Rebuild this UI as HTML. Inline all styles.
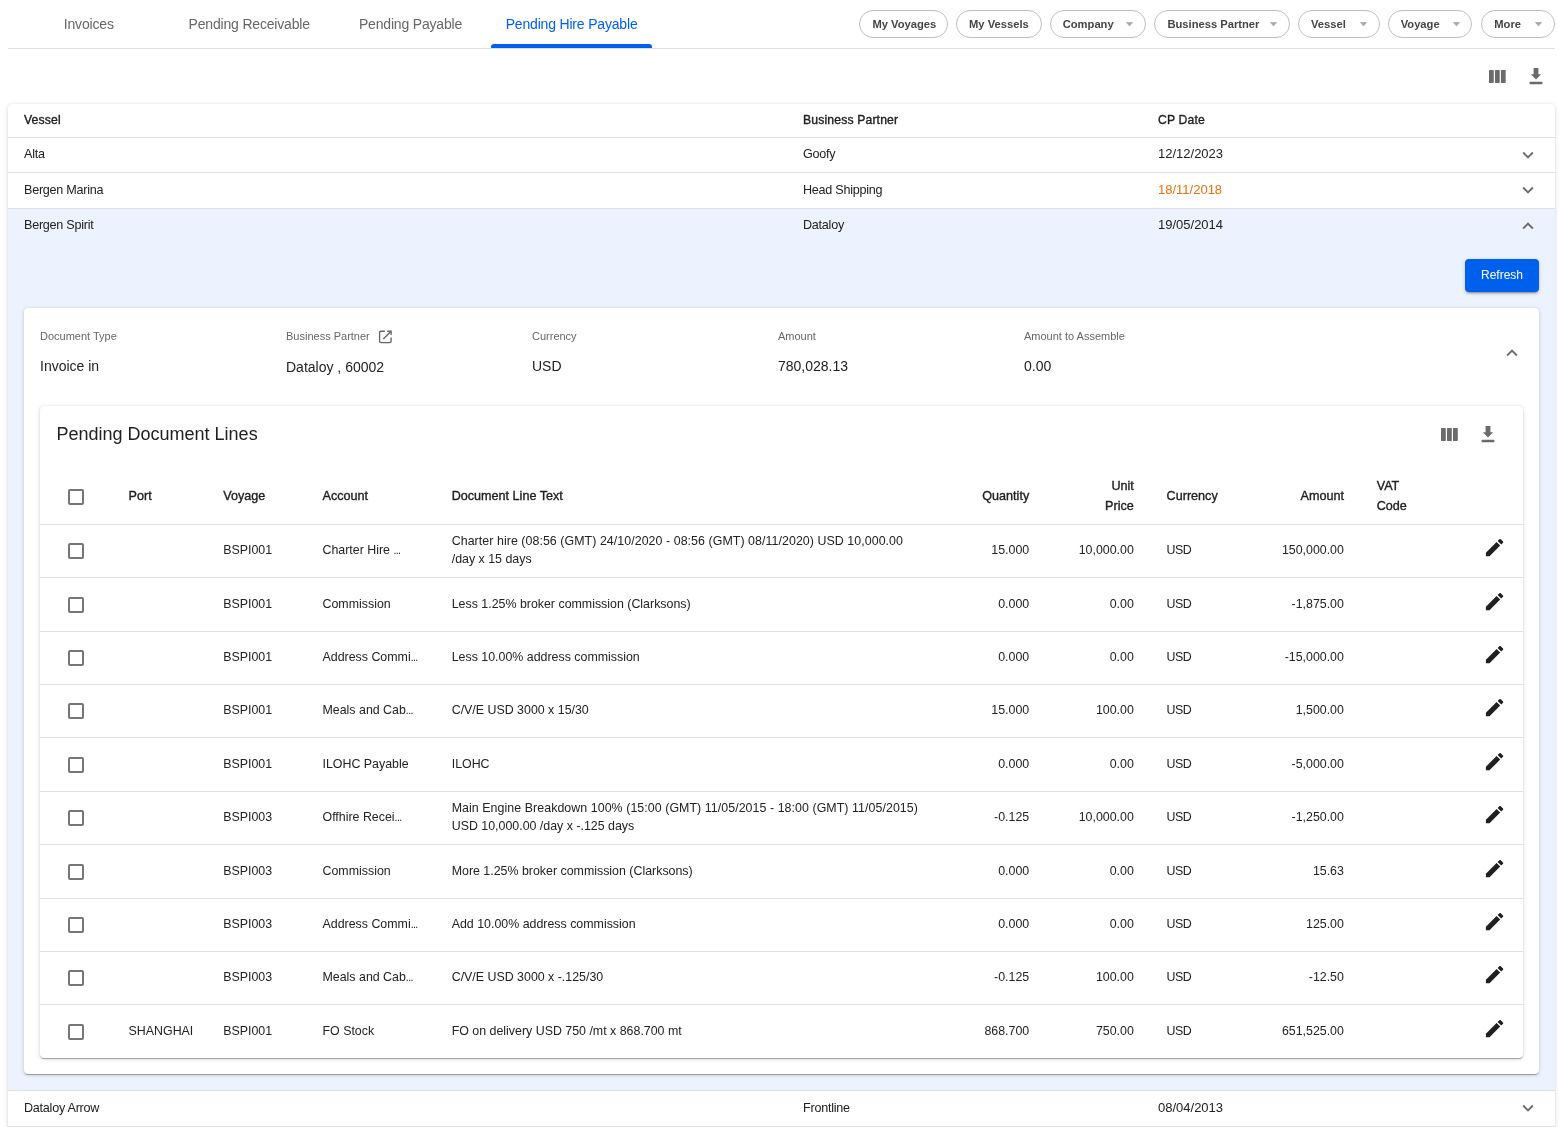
<!DOCTYPE html>
<html><head><meta charset="utf-8"><title>Pending Hire Payable</title>
<style>
html,body{margin:0;padding:0;background:#ffffff;}
#root{position:absolute;left:0;top:0;width:1559px;height:1127px;will-change:transform;}
body{width:1559px;height:1127px;position:relative;overflow:hidden;font-family:"Liberation Sans",sans-serif;}
.t{position:absolute;white-space:nowrap;line-height:20px;height:20px;}
.b{position:absolute;}
</style></head><body><div id="root">
<div class="t" style="left:-211.25px;width:600px;text-align:center;top:13.75px;font-size:14px;font-weight:400;color:#666666;letter-spacing:-0.18px;">Invoices</div>
<div class="t" style="left:-50.80px;width:600px;text-align:center;top:13.75px;font-size:14px;font-weight:400;color:#666666;letter-spacing:-0.18px;">Pending Receivable</div>
<div class="t" style="left:110.50px;width:600px;text-align:center;top:13.75px;font-size:14px;font-weight:400;color:#666666;letter-spacing:-0.18px;">Pending Payable</div>
<div class="t" style="left:271.60px;width:600px;text-align:center;top:13.75px;font-size:14px;font-weight:400;color:#0060ee;letter-spacing:-0.18px;">Pending Hire Payable</div>
<div class="b" style="left:8px;top:48px;width:1547px;height:1px;background:#e0e0e0"></div>
<div class="b" style="left:491px;top:44px;width:161px;height:4px;background:#0060ee;border-radius:3px 3px 0 0"></div>
<div class="b" style="left:859px;top:10px;width:87px;height:26px;border:1px solid #bdbdbd;border-radius:14px;background:#fff"></div>
<div class="t" style="left:872.40px;top:14.12px;font-size:11.2px;font-weight:700;color:#454545;">My Voyages</div>
<div class="b" style="left:956px;top:10px;width:84px;height:26px;border:1px solid #bdbdbd;border-radius:14px;background:#fff"></div>
<div class="t" style="left:969.00px;top:14.12px;font-size:11.2px;font-weight:700;color:#454545;">My Vessels</div>
<div class="b" style="left:1050px;top:10px;width:94px;height:26px;border:1px solid #bdbdbd;border-radius:14px;background:#fff"></div>
<div class="t" style="left:1062.70px;top:14.12px;font-size:11.2px;font-weight:700;color:#454545;">Company</div>
<svg class="b" style="left:1125.70px;top:22px" width="7" height="4.5" viewBox="0 0 7 4.5"><path d="M0.5 0.5 H6.5 L3.5 3.9 Z" fill="#aaaaaa" stroke="#aaaaaa" stroke-width="0.8" stroke-linejoin="round"/></svg>
<div class="b" style="left:1154px;top:10px;width:134px;height:26px;border:1px solid #bdbdbd;border-radius:14px;background:#fff"></div>
<div class="t" style="left:1167.40px;top:14.12px;font-size:11.2px;font-weight:700;color:#454545;">Business Partner</div>
<svg class="b" style="left:1269.50px;top:22px" width="7" height="4.5" viewBox="0 0 7 4.5"><path d="M0.5 0.5 H6.5 L3.5 3.9 Z" fill="#aaaaaa" stroke="#aaaaaa" stroke-width="0.8" stroke-linejoin="round"/></svg>
<div class="b" style="left:1298px;top:10px;width:80px;height:26px;border:1px solid #bdbdbd;border-radius:14px;background:#fff"></div>
<div class="t" style="left:1311.00px;top:14.12px;font-size:11.2px;font-weight:700;color:#454545;">Vessel</div>
<svg class="b" style="left:1359.50px;top:22px" width="7" height="4.5" viewBox="0 0 7 4.5"><path d="M0.5 0.5 H6.5 L3.5 3.9 Z" fill="#aaaaaa" stroke="#aaaaaa" stroke-width="0.8" stroke-linejoin="round"/></svg>
<div class="b" style="left:1388px;top:10px;width:82px;height:26px;border:1px solid #bdbdbd;border-radius:14px;background:#fff"></div>
<div class="t" style="left:1400.70px;top:14.12px;font-size:11.2px;font-weight:700;color:#454545;">Voyage</div>
<svg class="b" style="left:1452.60px;top:22px" width="7" height="4.5" viewBox="0 0 7 4.5"><path d="M0.5 0.5 H6.5 L3.5 3.9 Z" fill="#aaaaaa" stroke="#aaaaaa" stroke-width="0.8" stroke-linejoin="round"/></svg>
<div class="b" style="left:1481px;top:10px;width:72px;height:26px;border:1px solid #bdbdbd;border-radius:14px;background:#fff"></div>
<div class="t" style="left:1494.30px;top:14.12px;font-size:11.2px;font-weight:700;color:#454545;">More</div>
<svg class="b" style="left:1534.50px;top:22px" width="7" height="4.5" viewBox="0 0 7 4.5"><path d="M0.5 0.5 H6.5 L3.5 3.9 Z" fill="#aaaaaa" stroke="#aaaaaa" stroke-width="0.8" stroke-linejoin="round"/></svg>
<svg class="b" style="left:1488.80px;top:69.80px;overflow:visible" width="16.70" height="12.90" viewBox="0 0 16.70 12.90"><rect x="0.00" y="0" width="4.77" height="12.90" rx="0.6" fill="#6b6b6b"/><rect x="5.97" y="0" width="4.77" height="12.90" rx="0.6" fill="#6b6b6b"/><rect x="11.93" y="0" width="4.77" height="12.90" rx="0.6" fill="#6b6b6b"/></svg>
<svg class="b" style="left:1529.25px;top:67.80px;overflow:visible" width="14" height="17" viewBox="0 0 14 17"><path fill="#6b6b6b" d="M4.6 0 H9.4 V6.2 H12.15 L7 11.6 L1.85 6.2 H4.6 Z"/><rect x="0.55" y="13.7" width="12.9" height="2.5" rx="0.8" fill="#6b6b6b"/></svg>
<div class="b" style="left:8px;top:103.5px;width:1547px;height:1040px;background:#fff;border-radius:4px;box-shadow:0px 2px 1px -1px rgba(0,0,0,0.2),0px 1px 1px 0px rgba(0,0,0,0.14),0px 1px 5px 0px rgba(0,0,0,0.14),0 0 1px 0 rgba(0,0,0,0.12)"></div>
<div class="b" style="left:8px;top:208.5px;width:1547px;height:882px;background:#ecf2fe"></div>
<div class="t" style="left:24.00px;top:110.27px;font-size:12.2px;font-weight:400;color:#212121;letter-spacing:0.15px;-webkit-text-stroke:0.35px #212121;">Vessel</div>
<div class="t" style="left:803.00px;top:110.27px;font-size:12.2px;font-weight:400;color:#212121;letter-spacing:0.15px;-webkit-text-stroke:0.35px #212121;">Business Partner</div>
<div class="t" style="left:1158.00px;top:110.27px;font-size:12.2px;font-weight:400;color:#212121;letter-spacing:0.15px;-webkit-text-stroke:0.35px #212121;">CP Date</div>
<div class="b" style="left:8px;top:137px;width:1547px;height:1px;background:#e0e0e0"></div>
<div class="b" style="left:8px;top:172px;width:1547px;height:1px;background:#e0e0e0"></div>
<div class="b" style="left:8px;top:208px;width:1547px;height:1px;background:#e0e0e0"></div>
<div class="t" style="left:24.00px;top:144.03px;font-size:12.6px;font-weight:400;color:#212121;letter-spacing:-0.25px;">Alta</div>
<div class="t" style="left:803.00px;top:144.03px;font-size:12.6px;font-weight:400;color:#212121;letter-spacing:-0.25px;">Goofy</div>
<div class="t" style="left:1158.00px;top:143.90px;font-size:13px;font-weight:400;color:#212121;">12/12/2023</div>
<svg class="b" style="left:1517.20px;top:144.13px" width="22" height="22" viewBox="0 0 24 24"><path fill="#6e6e6e" d="M16.59 8.59 12 13.17 7.41 8.59 6 10l6 6 6-6z"/></svg>
<div class="t" style="left:24.00px;top:179.93px;font-size:12.6px;font-weight:400;color:#212121;letter-spacing:-0.25px;">Bergen Marina</div>
<div class="t" style="left:803.00px;top:179.93px;font-size:12.6px;font-weight:400;color:#212121;letter-spacing:-0.25px;">Head Shipping</div>
<div class="t" style="left:1158.00px;top:179.80px;font-size:13px;font-weight:400;color:#e8710a;">18/11/2018</div>
<svg class="b" style="left:1517.20px;top:179.23px" width="22" height="22" viewBox="0 0 24 24"><path fill="#6e6e6e" d="M16.59 8.59 12 13.17 7.41 8.59 6 10l6 6 6-6z"/></svg>
<div class="t" style="left:24.00px;top:215.03px;font-size:12.6px;font-weight:400;color:#212121;letter-spacing:-0.25px;">Bergen Spirit</div>
<div class="t" style="left:803.00px;top:215.03px;font-size:12.6px;font-weight:400;color:#212121;letter-spacing:-0.25px;">Dataloy</div>
<div class="t" style="left:1158.00px;top:214.90px;font-size:13px;font-weight:400;color:#212121;">19/05/2014</div>
<svg class="b" style="left:1517.20px;top:215.27px" width="22" height="22" viewBox="0 0 24 24"><path fill="#6e6e6e" d="M12 8l-6 6 1.41 1.41L12 10.83l4.59 4.58L18 14z"/></svg>
<div class="b" style="left:8px;top:1090px;width:1547px;height:1px;background:#e0e0e0"></div>
<div class="t" style="left:24.00px;top:1097.63px;font-size:12.6px;font-weight:400;color:#212121;letter-spacing:-0.25px;">Dataloy Arrow</div>
<div class="t" style="left:803.00px;top:1097.63px;font-size:12.6px;font-weight:400;color:#212121;letter-spacing:-0.25px;">Frontline</div>
<div class="t" style="left:1158.00px;top:1097.50px;font-size:13px;font-weight:400;color:#212121;">08/04/2013</div>
<svg class="b" style="left:1517.20px;top:1097.03px" width="22" height="22" viewBox="0 0 24 24"><path fill="#6e6e6e" d="M16.59 8.59 12 13.17 7.41 8.59 6 10l6 6 6-6z"/></svg>
<div class="b" style="left:8px;top:1126px;width:1547px;height:1px;background:#e0e0e0"></div>
<div class="b" style="left:1465px;top:259px;width:74px;height:33px;background:#0060ee;border-radius:4px;box-shadow:0px 3px 1px -2px rgba(0,0,0,0.2),0px 2px 2px 0px rgba(0,0,0,0.14),0px 1px 5px 0px rgba(0,0,0,0.12)"></div>
<div class="t" style="left:1202.00px;width:600px;text-align:center;top:264.84px;font-size:12px;font-weight:400;color:#ffffff;">Refresh</div>
<div class="b" style="left:24px;top:308px;width:1515px;height:766px;background:#fff;border-radius:4px;box-shadow:0px 2px 1px -1px rgba(0,0,0,0.2),0px 1px 1px 0px rgba(0,0,0,0.14),0px 1px 5px 0px rgba(0,0,0,0.14),0 0 1px 0 rgba(0,0,0,0.12)"></div>
<div class="t" style="left:40.00px;top:325.79px;font-size:11px;font-weight:400;color:#666666;">Document Type</div>
<div class="t" style="left:40.00px;top:356.45px;font-size:14px;font-weight:400;color:#212121;">Invoice in</div>
<div class="t" style="left:286.00px;top:325.79px;font-size:11px;font-weight:400;color:#666666;">Business Partner</div>
<div class="t" style="left:286.00px;top:357.45px;font-size:14px;font-weight:400;color:#212121;">Dataloy , 60002</div>
<div class="t" style="left:532.00px;top:325.79px;font-size:11px;font-weight:400;color:#666666;">Currency</div>
<div class="t" style="left:532.00px;top:356.45px;font-size:14px;font-weight:400;color:#212121;">USD</div>
<div class="t" style="left:778.00px;top:325.79px;font-size:11px;font-weight:400;color:#666666;">Amount</div>
<div class="t" style="left:778.00px;top:356.45px;font-size:14px;font-weight:400;color:#212121;">780,028.13</div>
<div class="t" style="left:1024.00px;top:325.79px;font-size:11px;font-weight:400;color:#666666;">Amount to Assemble</div>
<div class="t" style="left:1024.00px;top:356.45px;font-size:14px;font-weight:400;color:#212121;">0.00</div>
<svg class="b" style="left:378px;top:329.5px;overflow:visible" width="14" height="14" viewBox="0 0 14 14" fill="none" stroke="#666" stroke-width="1.35" stroke-linecap="butt"><path d="M6.8 1.2 H3.0 Q1.6 1.2 1.6 2.6 V11.2 Q1.6 12.6 3.0 12.6 H11.7 Q13.1 12.6 13.1 11.2 V7.6"/><path d="M5.3 9.0 L12.6 1.7"/><path d="M9.2 1.2 H13.1 V5.1"/></svg>
<svg class="b" style="left:1501.40px;top:342.27px" width="22" height="22" viewBox="0 0 24 24"><path fill="#6e6e6e" d="M12 8l-6 6 1.41 1.41L12 10.83l4.59 4.58L18 14z"/></svg>
<div class="b" style="left:40px;top:406px;width:1483px;height:652px;background:#fff;border-radius:4px;box-shadow:0px 2px 1px -1px rgba(0,0,0,0.2),0px 1px 1px 0px rgba(0,0,0,0.14),0px 1px 5px 0px rgba(0,0,0,0.14),0 0 1px 0 rgba(0,0,0,0.12)"></div>
<div class="t" style="left:56.50px;top:423.86px;font-size:18px;font-weight:400;color:#212121;">Pending Document Lines</div>
<svg class="b" style="left:1440.70px;top:427.80px;overflow:visible" width="16.80" height="12.90" viewBox="0 0 16.80 12.90"><rect x="0.00" y="0" width="4.80" height="12.90" rx="0.6" fill="#6b6b6b"/><rect x="6.00" y="0" width="4.80" height="12.90" rx="0.6" fill="#6b6b6b"/><rect x="12.00" y="0" width="4.80" height="12.90" rx="0.6" fill="#6b6b6b"/></svg>
<svg class="b" style="left:1481.20px;top:425.60px;overflow:visible" width="14" height="17" viewBox="0 0 14 17"><path fill="#6b6b6b" d="M4.6 0 H9.4 V6.2 H12.15 L7 11.6 L1.85 6.2 H4.6 Z"/><rect x="0.55" y="13.7" width="12.9" height="2.5" rx="0.8" fill="#6b6b6b"/></svg>
<div class="b" style="left:68px;top:488.70px;width:12.4px;height:12.4px;border:2px solid #767676;border-radius:2px"></div>
<div class="t" style="left:128.60px;top:485.93px;font-size:12.6px;font-weight:400;color:#212121;-webkit-text-stroke:0.35px #212121;">Port</div>
<div class="t" style="left:223.20px;top:485.93px;font-size:12.6px;font-weight:400;color:#212121;-webkit-text-stroke:0.35px #212121;">Voyage</div>
<div class="t" style="left:322.50px;top:485.93px;font-size:12.6px;font-weight:400;color:#212121;-webkit-text-stroke:0.35px #212121;">Account</div>
<div class="t" style="left:451.70px;top:485.93px;font-size:12.6px;font-weight:400;color:#212121;-webkit-text-stroke:0.35px #212121;">Document Line Text</div>
<div class="t" style="left:429.20px;width:600px;text-align:right;top:485.93px;font-size:12.6px;font-weight:400;color:#212121;-webkit-text-stroke:0.35px #212121;">Quantity</div>
<div class="t" style="left:533.80px;width:600px;text-align:right;top:475.63px;font-size:12.6px;font-weight:400;color:#212121;-webkit-text-stroke:0.35px #212121;">Unit</div>
<div class="t" style="left:533.80px;width:600px;text-align:right;top:496.43px;font-size:12.6px;font-weight:400;color:#212121;-webkit-text-stroke:0.35px #212121;">Price</div>
<div class="t" style="left:1166.60px;top:485.93px;font-size:12.6px;font-weight:400;color:#212121;-webkit-text-stroke:0.35px #212121;">Currency</div>
<div class="t" style="left:743.90px;width:600px;text-align:right;top:485.93px;font-size:12.6px;font-weight:400;color:#212121;-webkit-text-stroke:0.35px #212121;">Amount</div>
<div class="t" style="left:1376.70px;top:475.63px;font-size:12.6px;font-weight:400;color:#212121;-webkit-text-stroke:0.35px #212121;">VAT</div>
<div class="t" style="left:1376.70px;top:496.43px;font-size:12.6px;font-weight:400;color:#212121;-webkit-text-stroke:0.35px #212121;">Code</div>
<div class="b" style="left:40px;top:524px;width:1483px;height:1px;background:#e0e0e0"></div>
<div class="b" style="left:40px;top:577px;width:1483px;height:1px;background:#e0e0e0"></div>
<div class="b" style="left:40px;top:631px;width:1483px;height:1px;background:#e0e0e0"></div>
<div class="b" style="left:40px;top:684px;width:1483px;height:1px;background:#e0e0e0"></div>
<div class="b" style="left:40px;top:737px;width:1483px;height:1px;background:#e0e0e0"></div>
<div class="b" style="left:40px;top:791px;width:1483px;height:1px;background:#e0e0e0"></div>
<div class="b" style="left:40px;top:844px;width:1483px;height:1px;background:#e0e0e0"></div>
<div class="b" style="left:40px;top:898px;width:1483px;height:1px;background:#e0e0e0"></div>
<div class="b" style="left:40px;top:951px;width:1483px;height:1px;background:#e0e0e0"></div>
<div class="b" style="left:40px;top:1004px;width:1483px;height:1px;background:#e0e0e0"></div>
<div class="b" style="left:68px;top:542.70px;width:12.4px;height:12.4px;border:2px solid #767676;border-radius:2px"></div>
<div class="t" style="left:223.20px;top:539.70px;font-size:12.4px;font-weight:400;color:#222222;">BSPI001</div>
<div class="t" style="left:322.50px;top:539.70px;font-size:12.4px;font-weight:400;color:#222222;">Charter Hire <span style="letter-spacing:-0.6px;font-size:0.85em">...</span></div>
<div class="t" style="left:451.70px;top:530.70px;font-size:12.4px;font-weight:400;color:#222222;letter-spacing:0.06px;">Charter hire (08:56 (GMT) 24/10/2020 - 08:56 (GMT) 08/11/2020) USD 10,000.00</div>
<div class="t" style="left:451.70px;top:549.00px;font-size:12.4px;font-weight:400;color:#222222;">/day x 15 days</div>
<div class="t" style="left:429.20px;width:600px;text-align:right;top:539.70px;font-size:12.4px;font-weight:400;color:#222222;">15.000</div>
<div class="t" style="left:533.80px;width:600px;text-align:right;top:539.70px;font-size:12.4px;font-weight:400;color:#222222;">10,000.00</div>
<div class="t" style="left:1166.60px;top:539.70px;font-size:12.4px;font-weight:400;color:#222222;letter-spacing:-0.5px;">USD</div>
<div class="t" style="left:743.90px;width:600px;text-align:right;top:539.70px;font-size:12.4px;font-weight:400;color:#222222;">150,000.00</div>
<svg class="b" style="left:1482.90px;top:536.40px" width="23.2" height="23.2" viewBox="0 0 24 24"><path fill="#1f1f1f" d="M3 17.25V21h3.75L17.81 9.94l-3.75-3.75L3 17.25zM20.71 7.04c.39-.39.39-1.02 0-1.41l-2.34-2.34c-.39-.39-1.02-.39-1.41 0l-1.83 1.83 3.75 3.75 1.83-1.83z"/></svg>
<div class="b" style="left:68px;top:596.70px;width:12.4px;height:12.4px;border:2px solid #767676;border-radius:2px"></div>
<div class="t" style="left:223.20px;top:593.70px;font-size:12.4px;font-weight:400;color:#222222;">BSPI001</div>
<div class="t" style="left:322.50px;top:593.70px;font-size:12.4px;font-weight:400;color:#222222;">Commission</div>
<div class="t" style="left:451.70px;top:593.70px;font-size:12.4px;font-weight:400;color:#222222;">Less 1.25% broker commission (Clarksons)</div>
<div class="t" style="left:429.20px;width:600px;text-align:right;top:593.70px;font-size:12.4px;font-weight:400;color:#222222;">0.000</div>
<div class="t" style="left:533.80px;width:600px;text-align:right;top:593.70px;font-size:12.4px;font-weight:400;color:#222222;">0.00</div>
<div class="t" style="left:1166.60px;top:593.70px;font-size:12.4px;font-weight:400;color:#222222;letter-spacing:-0.5px;">USD</div>
<div class="t" style="left:743.90px;width:600px;text-align:right;top:593.70px;font-size:12.4px;font-weight:400;color:#222222;">-1,875.00</div>
<svg class="b" style="left:1482.90px;top:590.40px" width="23.2" height="23.2" viewBox="0 0 24 24"><path fill="#1f1f1f" d="M3 17.25V21h3.75L17.81 9.94l-3.75-3.75L3 17.25zM20.71 7.04c.39-.39.39-1.02 0-1.41l-2.34-2.34c-.39-.39-1.02-.39-1.41 0l-1.83 1.83 3.75 3.75 1.83-1.83z"/></svg>
<div class="b" style="left:68px;top:649.70px;width:12.4px;height:12.4px;border:2px solid #767676;border-radius:2px"></div>
<div class="t" style="left:223.20px;top:646.70px;font-size:12.4px;font-weight:400;color:#222222;">BSPI001</div>
<div class="t" style="left:322.50px;top:646.70px;font-size:12.4px;font-weight:400;color:#222222;">Address Commi<span style="letter-spacing:-0.6px;font-size:0.85em">...</span></div>
<div class="t" style="left:451.70px;top:646.70px;font-size:12.4px;font-weight:400;color:#222222;">Less 10.00% address commission</div>
<div class="t" style="left:429.20px;width:600px;text-align:right;top:646.70px;font-size:12.4px;font-weight:400;color:#222222;">0.000</div>
<div class="t" style="left:533.80px;width:600px;text-align:right;top:646.70px;font-size:12.4px;font-weight:400;color:#222222;">0.00</div>
<div class="t" style="left:1166.60px;top:646.70px;font-size:12.4px;font-weight:400;color:#222222;letter-spacing:-0.5px;">USD</div>
<div class="t" style="left:743.90px;width:600px;text-align:right;top:646.70px;font-size:12.4px;font-weight:400;color:#222222;">-15,000.00</div>
<svg class="b" style="left:1482.90px;top:643.40px" width="23.2" height="23.2" viewBox="0 0 24 24"><path fill="#1f1f1f" d="M3 17.25V21h3.75L17.81 9.94l-3.75-3.75L3 17.25zM20.71 7.04c.39-.39.39-1.02 0-1.41l-2.34-2.34c-.39-.39-1.02-.39-1.41 0l-1.83 1.83 3.75 3.75 1.83-1.83z"/></svg>
<div class="b" style="left:68px;top:702.70px;width:12.4px;height:12.4px;border:2px solid #767676;border-radius:2px"></div>
<div class="t" style="left:223.20px;top:699.70px;font-size:12.4px;font-weight:400;color:#222222;">BSPI001</div>
<div class="t" style="left:322.50px;top:699.70px;font-size:12.4px;font-weight:400;color:#222222;">Meals and Cab<span style="letter-spacing:-0.6px;font-size:0.85em">...</span></div>
<div class="t" style="left:451.70px;top:699.70px;font-size:12.4px;font-weight:400;color:#222222;">C/V/E USD 3000 x 15/30</div>
<div class="t" style="left:429.20px;width:600px;text-align:right;top:699.70px;font-size:12.4px;font-weight:400;color:#222222;">15.000</div>
<div class="t" style="left:533.80px;width:600px;text-align:right;top:699.70px;font-size:12.4px;font-weight:400;color:#222222;">100.00</div>
<div class="t" style="left:1166.60px;top:699.70px;font-size:12.4px;font-weight:400;color:#222222;letter-spacing:-0.5px;">USD</div>
<div class="t" style="left:743.90px;width:600px;text-align:right;top:699.70px;font-size:12.4px;font-weight:400;color:#222222;">1,500.00</div>
<svg class="b" style="left:1482.90px;top:696.40px" width="23.2" height="23.2" viewBox="0 0 24 24"><path fill="#1f1f1f" d="M3 17.25V21h3.75L17.81 9.94l-3.75-3.75L3 17.25zM20.71 7.04c.39-.39.39-1.02 0-1.41l-2.34-2.34c-.39-.39-1.02-.39-1.41 0l-1.83 1.83 3.75 3.75 1.83-1.83z"/></svg>
<div class="b" style="left:68px;top:756.70px;width:12.4px;height:12.4px;border:2px solid #767676;border-radius:2px"></div>
<div class="t" style="left:223.20px;top:753.70px;font-size:12.4px;font-weight:400;color:#222222;">BSPI001</div>
<div class="t" style="left:322.50px;top:753.70px;font-size:12.4px;font-weight:400;color:#222222;">ILOHC Payable</div>
<div class="t" style="left:451.70px;top:753.70px;font-size:12.4px;font-weight:400;color:#222222;">ILOHC</div>
<div class="t" style="left:429.20px;width:600px;text-align:right;top:753.70px;font-size:12.4px;font-weight:400;color:#222222;">0.000</div>
<div class="t" style="left:533.80px;width:600px;text-align:right;top:753.70px;font-size:12.4px;font-weight:400;color:#222222;">0.00</div>
<div class="t" style="left:1166.60px;top:753.70px;font-size:12.4px;font-weight:400;color:#222222;letter-spacing:-0.5px;">USD</div>
<div class="t" style="left:743.90px;width:600px;text-align:right;top:753.70px;font-size:12.4px;font-weight:400;color:#222222;">-5,000.00</div>
<svg class="b" style="left:1482.90px;top:750.40px" width="23.2" height="23.2" viewBox="0 0 24 24"><path fill="#1f1f1f" d="M3 17.25V21h3.75L17.81 9.94l-3.75-3.75L3 17.25zM20.71 7.04c.39-.39.39-1.02 0-1.41l-2.34-2.34c-.39-.39-1.02-.39-1.41 0l-1.83 1.83 3.75 3.75 1.83-1.83z"/></svg>
<div class="b" style="left:68px;top:809.70px;width:12.4px;height:12.4px;border:2px solid #767676;border-radius:2px"></div>
<div class="t" style="left:223.20px;top:806.70px;font-size:12.4px;font-weight:400;color:#222222;">BSPI003</div>
<div class="t" style="left:322.50px;top:806.70px;font-size:12.4px;font-weight:400;color:#222222;">Offhire Recei<span style="letter-spacing:-0.6px;font-size:0.85em">...</span></div>
<div class="t" style="left:451.70px;top:797.70px;font-size:12.4px;font-weight:400;color:#222222;letter-spacing:0.06px;">Main Engine Breakdown 100% (15:00 (GMT) 11/05/2015 - 18:00 (GMT) 11/05/2015)</div>
<div class="t" style="left:451.70px;top:816.00px;font-size:12.4px;font-weight:400;color:#222222;">USD 10,000.00 /day x -.125 days</div>
<div class="t" style="left:429.20px;width:600px;text-align:right;top:806.70px;font-size:12.4px;font-weight:400;color:#222222;">-0.125</div>
<div class="t" style="left:533.80px;width:600px;text-align:right;top:806.70px;font-size:12.4px;font-weight:400;color:#222222;">10,000.00</div>
<div class="t" style="left:1166.60px;top:806.70px;font-size:12.4px;font-weight:400;color:#222222;letter-spacing:-0.5px;">USD</div>
<div class="t" style="left:743.90px;width:600px;text-align:right;top:806.70px;font-size:12.4px;font-weight:400;color:#222222;">-1,250.00</div>
<svg class="b" style="left:1482.90px;top:803.40px" width="23.2" height="23.2" viewBox="0 0 24 24"><path fill="#1f1f1f" d="M3 17.25V21h3.75L17.81 9.94l-3.75-3.75L3 17.25zM20.71 7.04c.39-.39.39-1.02 0-1.41l-2.34-2.34c-.39-.39-1.02-.39-1.41 0l-1.83 1.83 3.75 3.75 1.83-1.83z"/></svg>
<div class="b" style="left:68px;top:863.70px;width:12.4px;height:12.4px;border:2px solid #767676;border-radius:2px"></div>
<div class="t" style="left:223.20px;top:860.70px;font-size:12.4px;font-weight:400;color:#222222;">BSPI003</div>
<div class="t" style="left:322.50px;top:860.70px;font-size:12.4px;font-weight:400;color:#222222;">Commission</div>
<div class="t" style="left:451.70px;top:860.70px;font-size:12.4px;font-weight:400;color:#222222;">More 1.25% broker commission (Clarksons)</div>
<div class="t" style="left:429.20px;width:600px;text-align:right;top:860.70px;font-size:12.4px;font-weight:400;color:#222222;">0.000</div>
<div class="t" style="left:533.80px;width:600px;text-align:right;top:860.70px;font-size:12.4px;font-weight:400;color:#222222;">0.00</div>
<div class="t" style="left:1166.60px;top:860.70px;font-size:12.4px;font-weight:400;color:#222222;letter-spacing:-0.5px;">USD</div>
<div class="t" style="left:743.90px;width:600px;text-align:right;top:860.70px;font-size:12.4px;font-weight:400;color:#222222;">15.63</div>
<svg class="b" style="left:1482.90px;top:857.40px" width="23.2" height="23.2" viewBox="0 0 24 24"><path fill="#1f1f1f" d="M3 17.25V21h3.75L17.81 9.94l-3.75-3.75L3 17.25zM20.71 7.04c.39-.39.39-1.02 0-1.41l-2.34-2.34c-.39-.39-1.02-.39-1.41 0l-1.83 1.83 3.75 3.75 1.83-1.83z"/></svg>
<div class="b" style="left:68px;top:916.70px;width:12.4px;height:12.4px;border:2px solid #767676;border-radius:2px"></div>
<div class="t" style="left:223.20px;top:913.70px;font-size:12.4px;font-weight:400;color:#222222;">BSPI003</div>
<div class="t" style="left:322.50px;top:913.70px;font-size:12.4px;font-weight:400;color:#222222;">Address Commi<span style="letter-spacing:-0.6px;font-size:0.85em">...</span></div>
<div class="t" style="left:451.70px;top:913.70px;font-size:12.4px;font-weight:400;color:#222222;">Add 10.00% address commission</div>
<div class="t" style="left:429.20px;width:600px;text-align:right;top:913.70px;font-size:12.4px;font-weight:400;color:#222222;">0.000</div>
<div class="t" style="left:533.80px;width:600px;text-align:right;top:913.70px;font-size:12.4px;font-weight:400;color:#222222;">0.00</div>
<div class="t" style="left:1166.60px;top:913.70px;font-size:12.4px;font-weight:400;color:#222222;letter-spacing:-0.5px;">USD</div>
<div class="t" style="left:743.90px;width:600px;text-align:right;top:913.70px;font-size:12.4px;font-weight:400;color:#222222;">125.00</div>
<svg class="b" style="left:1482.90px;top:910.40px" width="23.2" height="23.2" viewBox="0 0 24 24"><path fill="#1f1f1f" d="M3 17.25V21h3.75L17.81 9.94l-3.75-3.75L3 17.25zM20.71 7.04c.39-.39.39-1.02 0-1.41l-2.34-2.34c-.39-.39-1.02-.39-1.41 0l-1.83 1.83 3.75 3.75 1.83-1.83z"/></svg>
<div class="b" style="left:68px;top:969.70px;width:12.4px;height:12.4px;border:2px solid #767676;border-radius:2px"></div>
<div class="t" style="left:223.20px;top:966.70px;font-size:12.4px;font-weight:400;color:#222222;">BSPI003</div>
<div class="t" style="left:322.50px;top:966.70px;font-size:12.4px;font-weight:400;color:#222222;">Meals and Cab<span style="letter-spacing:-0.6px;font-size:0.85em">...</span></div>
<div class="t" style="left:451.70px;top:966.70px;font-size:12.4px;font-weight:400;color:#222222;">C/V/E USD 3000 x -.125/30</div>
<div class="t" style="left:429.20px;width:600px;text-align:right;top:966.70px;font-size:12.4px;font-weight:400;color:#222222;">-0.125</div>
<div class="t" style="left:533.80px;width:600px;text-align:right;top:966.70px;font-size:12.4px;font-weight:400;color:#222222;">100.00</div>
<div class="t" style="left:1166.60px;top:966.70px;font-size:12.4px;font-weight:400;color:#222222;letter-spacing:-0.5px;">USD</div>
<div class="t" style="left:743.90px;width:600px;text-align:right;top:966.70px;font-size:12.4px;font-weight:400;color:#222222;">-12.50</div>
<svg class="b" style="left:1482.90px;top:963.40px" width="23.2" height="23.2" viewBox="0 0 24 24"><path fill="#1f1f1f" d="M3 17.25V21h3.75L17.81 9.94l-3.75-3.75L3 17.25zM20.71 7.04c.39-.39.39-1.02 0-1.41l-2.34-2.34c-.39-.39-1.02-.39-1.41 0l-1.83 1.83 3.75 3.75 1.83-1.83z"/></svg>
<div class="b" style="left:68px;top:1023.70px;width:12.4px;height:12.4px;border:2px solid #767676;border-radius:2px"></div>
<div class="t" style="left:128.60px;top:1020.70px;font-size:12.4px;font-weight:400;color:#222222;">SHANGHAI</div>
<div class="t" style="left:223.20px;top:1020.70px;font-size:12.4px;font-weight:400;color:#222222;">BSPI001</div>
<div class="t" style="left:322.50px;top:1020.70px;font-size:12.4px;font-weight:400;color:#222222;">FO Stock</div>
<div class="t" style="left:451.70px;top:1020.70px;font-size:12.4px;font-weight:400;color:#222222;">FO on delivery USD 750 /mt x 868.700 mt</div>
<div class="t" style="left:429.20px;width:600px;text-align:right;top:1020.70px;font-size:12.4px;font-weight:400;color:#222222;">868.700</div>
<div class="t" style="left:533.80px;width:600px;text-align:right;top:1020.70px;font-size:12.4px;font-weight:400;color:#222222;">750.00</div>
<div class="t" style="left:1166.60px;top:1020.70px;font-size:12.4px;font-weight:400;color:#222222;letter-spacing:-0.5px;">USD</div>
<div class="t" style="left:743.90px;width:600px;text-align:right;top:1020.70px;font-size:12.4px;font-weight:400;color:#222222;">651,525.00</div>
<svg class="b" style="left:1482.90px;top:1017.40px" width="23.2" height="23.2" viewBox="0 0 24 24"><path fill="#1f1f1f" d="M3 17.25V21h3.75L17.81 9.94l-3.75-3.75L3 17.25zM20.71 7.04c.39-.39.39-1.02 0-1.41l-2.34-2.34c-.39-.39-1.02-.39-1.41 0l-1.83 1.83 3.75 3.75 1.83-1.83z"/></svg>
</div></body></html>
